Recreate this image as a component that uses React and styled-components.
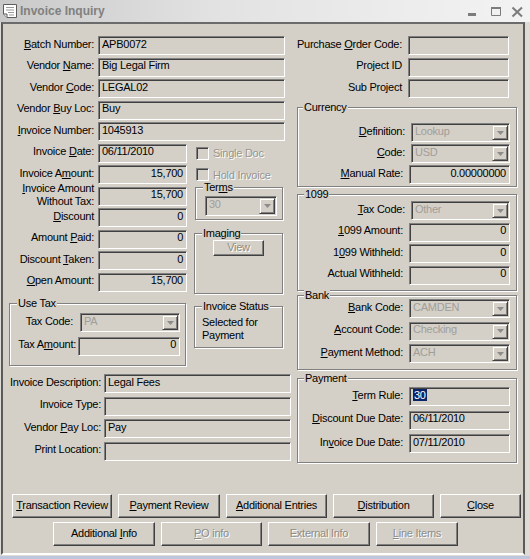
import React from "react";
import styled, { createGlobalStyle } from "styled-components";

const GlobalStyle = createGlobalStyle`
  html, body { margin: 0; padding: 0; background: #d4d0c8; }
  #root { width: 530px; height: 559px; }
`;

const Window = styled.div`
  width: 530px;
  height: 559px;
  display: flex;
  flex-direction: column;
  background: #dedbd5;
  overflow: hidden;
  font-family: "Liberation Sans", Arial, sans-serif;
  font-size: 11px;
  letter-spacing: -0.25px;
  color: #000;
`;

const TitleBar = styled.div`
  height: 22px;
  flex: none;
  display: flex;
  align-items: center;
  padding: 0 6px 0 2px;
  box-sizing: border-box;
  background: linear-gradient(90deg, #c9c9c9 0%, #e2e2e2 40%, #f3f3f3 100%);
`;

const TitleText = styled.div`
  flex: 1;
  margin-left: 2px;
  font-size: 12px;
  font-weight: bold;
  letter-spacing: 0;
  color: #808080;
`;

const TitleGlyph = styled.svg`
  display: block;
  flex: none;
  margin-left: ${(p) => p.$ml || 0}px;
`;

const Frame = styled.div`
  flex: 1;
  display: flex;
  flex-direction: column;
  margin: 0 5px 0 1px;
  background: #d4d0c8;
  border-style: solid;
  border-width: 2px;
  border-color: #6b6b6b #5a5a5a #ffffff #5a5a5a;
  padding: 12px 0 0 5px;
`;

const BottomStrip = styled.div`
  flex: none;
  height: 3px;
  margin-top: 1px;
  background: #bcc6dc;
`;

const MainArea = styled.div`
  display: flex;
  align-items: flex-start;
  gap: 5px;
`;

const Pane = styled.div`
  width: ${(p) => p.$w}px;
  flex: none;
  display: flex;
  flex-direction: column;
`;

const Stack = styled.div`
  display: flex;
  flex-direction: column;
  gap: ${(p) => p.$gap ?? 0}px;
  margin-top: ${(p) => p.$mt ?? 0}px;
  ${(p) => (p.$w ? `width:${p.$w}px; flex:none;` : "")}
`;

const Split = styled.div`
  display: flex;
  align-items: flex-start;
  gap: ${(p) => p.$gap ?? 0}px;
  margin-top: ${(p) => p.$mt ?? 0}px;
  margin-left: ${(p) => p.$ml ?? 0}px;
`;

const Row = styled.div`
  display: flex;
  align-items: center;
  justify-content: ${(p) => (p.$end ? "flex-end" : "flex-start")};
  height: ${(p) => p.$h ?? 19}px;
  gap: ${(p) => p.$gap ?? 4}px;
  padding-right: ${(p) => p.$pr ?? 0}px;
  flex: none;
`;

const Label = styled.span`
  ${(p) => (p.$w ? `width:${p.$w}px; flex:none;` : "")}
  text-align: right;
  white-space: nowrap;
  line-height: 13px;
  padding-bottom: 3px;
`;

const Field = styled.div`
  width: ${(p) => p.$w}px;
  height: 100%;
  flex: none;
  box-sizing: border-box;
  border: 1px solid;
  border-color: #808080 #ffffff #ffffff #808080;
  box-shadow: inset 1px 1px 0 #404040, inset -1px -1px 0 #d4d0c8;
  background: #d4d0c8;
  display: flex;
  align-items: center;
  justify-content: ${(p) => (p.$right ? "flex-end" : "flex-start")};
  padding: 0 3px 3px 3px;
  white-space: nowrap;
  overflow: hidden;
  line-height: 13px;
`;

const ComboBox = styled(Field)`
  justify-content: space-between;
  padding: 0 1px 0 3px;
  color: #a19e99;
`;

const ComboText = styled.span`
  padding-bottom: 3px;
`;

const DropButton = styled.span`
  width: 16px;
  height: calc(100% - 2px);
  flex: none;
  box-sizing: border-box;
  border: 1px solid;
  border-color: #d4d0c8 #404040 #404040 #d4d0c8;
  box-shadow: inset 1px 1px 0 #ffffff, inset -1px -1px 0 #808080;
  background: #d4d0c8;
  display: flex;
  align-items: center;
  justify-content: center;
`;

const Selected = styled.span`
  background: #0a246a;
  color: #ffffff;
  padding: 0 1px;
  line-height: 12px;
`;

const Group = styled.div`
  position: relative;
  box-sizing: border-box;
  width: ${(p) => p.$w}px;
  flex: none;
  margin-top: ${(p) => p.$mt ?? 0}px;
  margin-left: ${(p) => p.$ml ?? 0}px;
  border: 1px solid #808080;
  box-shadow: inset 1px 1px 0 #ffffff, 1px 1px 0 #ffffff;
  padding: ${(p) => p.$pad || "0"};
  display: flex;
  flex-direction: column;
  gap: ${(p) => p.$gap ?? 0}px;
`;

const Legend = styled.span`
  position: absolute;
  top: -7px;
  left: ${(p) => p.$x ?? 6}px;
  padding: 0 1px;
  background: #d4d0c8;
  line-height: 13px;
  white-space: nowrap;
`;

const StatusText = styled.div`
  line-height: 12.5px;
`;

const CheckRow = styled.div`
  display: flex;
  align-items: center;
  gap: 4px;
  height: 19px;
  padding-left: 2px;
  color: #97948f;
  text-shadow: 1px 1px 0 #ffffff;
`;

const CheckBox = styled.span`
  width: 13px;
  height: 13px;
  flex: none;
  box-sizing: border-box;
  border: 1px solid;
  border-color: #808080 #ffffff #ffffff #808080;
  box-shadow: inset 1px 1px 0 #404040, inset -1px -1px 0 #d4d0c8;
  background: #d4d0c8;
`;

const ButtonRow = styled.div`
  display: flex;
  gap: 6px;
  margin-top: ${(p) => p.$mt ?? 0}px;
  margin-left: ${(p) => p.$ml ?? 0}px;
`;

const Button = styled.button`
  width: ${(p) => p.$w}px;
  height: ${(p) => p.$h ?? 24}px;
  flex: none;
  box-sizing: border-box;
  margin: 0;
  padding: 0 0 2px 0;
  font: inherit;
  letter-spacing: inherit;
  background: #d4d0c8;
  border: 1px solid;
  border-color: #ffffff #404040 #404040 #ffffff;
  box-shadow: inset -1px -1px 0 #808080;
  color: ${(p) => (p.disabled ? "#8e8b86" : "#000000")};
  text-shadow: ${(p) => (p.disabled ? "1px 1px 0 #ffffff" : "none")};
  align-self: ${(p) => (p.$center ? "center" : "auto")};
  margin-left: ${(p) => p.$ml ?? 0}px;
`;

const Arrow = () => (
  <svg width="7" height="4" viewBox="0 0 7 4">
    <polygon points="0,0 7,0 3.5,4" fill="#8c8c8c" />
  </svg>
);

const Combo = ({ w, children }) => (
  <ComboBox $w={w}>
    <ComboText>{children}</ComboText>
    <DropButton>
      <Arrow />
    </DropButton>
  </ComboBox>
);

const DocIcon = () => (
  <TitleGlyph width="16" height="16" viewBox="0 0 16 16">
    <path d="M1.5 1.5H14.5V14.5H5L1.5 11Z" fill="#ffffff" stroke="#5c5c5c" />
    <path d="M1.5 11H5V14.5" fill="#e0e0e0" stroke="#5c5c5c" />
    <path d="M4 4.5H12M4 7H12M6 9.5H12M7 12H12" stroke="#9a9a9a" />
  </TitleGlyph>
);

const topRows = [
  [<><u>B</u>atch Number:</>, "APB0072"],
  [<>Vendor <u>N</u>ame:</>, "Big Legal Firm"],
  [<>Vendor <u>C</u>ode:</>, "LEGAL02"],
  [<>Vendor <u>B</u>uy Loc:</>, "Buy"],
  [<><u>I</u>nvoice Number:</>, "1045913"],
];

const moneyRows = [
  [<>Invoice <u>D</u>ate:</>, "06/11/2010", false],
  [<>Invoice A<u>m</u>ount:</>, "15,700", true],
  [<><u>I</u>nvoice Amount<br />Without Tax:</>, "15,700", true],
  [<><u>D</u>iscount</>, "0", true],
  [<>Amount <u>P</u>aid:</>, "0", true],
  [<>Discount <u>T</u>aken:</>, "0", true],
  [<><u>O</u>pen Amount:</>, "15,700", true],
];

const bottomRows = [
  ["Invoice Description:", "Legal Fees"],
  ["Invoice Type:", ""],
  [<>Vendor <u>P</u>ay Loc:</>, "Pay"],
  ["Print Location:", ""],
];

const poRows = [
  [<>Purchase <u>O</u>rder Code:</>, ""],
  ["Project ID", ""],
  ["Sub Project", ""],
];

export default function App() {
  return (
    <>
      <GlobalStyle />
      <Window>
        <TitleBar>
          <DocIcon />
          <TitleText>Invoice Inquiry</TitleText>
          <TitleGlyph width="9" height="16" viewBox="0 0 9 16">
            <rect x="0" y="10" width="8" height="3" fill="#7c7c7c" />
          </TitleGlyph>
          <TitleGlyph $ml={14} width="11" height="16" viewBox="0 0 11 16">
            <path d="M0.5 4.5H9.5V12.5H0.5Z" fill="none" stroke="#7c7c7c" />
            <rect x="0" y="4" width="10" height="2" fill="#7c7c7c" />
          </TitleGlyph>
          <TitleGlyph $ml={9} width="13" height="16" viewBox="0 0 13 16">
            <path d="M1.5 4.5L11 13.5M11 4.5L1.5 13.5" stroke="#7c7c7c" strokeWidth="2" />
          </TitleGlyph>
        </TitleBar>

        <Frame>
          <MainArea>
            <Pane $w={283}>
              <Stack $gap={2.5}>
                {topRows.map(([l, v], i) => (
                  <Row key={i}>
                    <Label $w={86}>{l}</Label>
                    <Field $w={187}>{v}</Field>
                  </Row>
                ))}
                <Split $gap={7}>
                  <Stack $gap={2.5} $w={179}>
                    {moneyRows.map(([l, v, r], i) => (
                      <Row key={i}>
                        <Label $w={86}>{l}</Label>
                        <Field $w={89} $right={r}>{v}</Field>
                      </Row>
                    ))}
                  </Stack>
                  <Stack $gap={2.5} $w={89}>
                    <CheckRow>
                      <CheckBox />
                      Single Doc
                    </CheckRow>
                    <CheckRow>
                      <CheckBox />
                      Hold Invoice
                    </CheckRow>
                    <Group $w={88} $ml={1} $pad="8.5px 4px 3px 9px">
                      <Legend $x={7}>Ter<u>m</u>s</Legend>
                      <Row $h={20}>
                        <Combo w={72}>30</Combo>
                      </Row>
                    </Group>
                    <Group $w={89} $mt={10} $pad="6.5px 0 37px 0">
                      <Legend $x={7}>Imaging</Legend>
                      <Button $w={51} $h={16} $center disabled>
                        View
                      </Button>
                    </Group>
                  </Stack>
                </Split>
              </Stack>

              <Split $gap={8} $mt={9} $ml={1}>
                <Group $w={177} $pad="9px 5px 9px 0" $gap={4.5}>
                  <Legend $x={7}>Use Tax</Legend>
                  <Row $end $gap={7}>
                    <Label>Tax Code:</Label>
                    <Combo w={100}>PA</Combo>
                  </Row>
                  <Row $end $gap={2}>
                    <Label>
                      Tax A<u>m</u>ount:
                    </Label>
                    <Field $w={102} $right>0</Field>
                  </Row>
                </Group>
                <Group $w={89} $mt={3} $pad="9px 4px 6px 7px">
                  <Legend $x={7}>Invoice Status</Legend>
                  <StatusText>
                    Selected for
                    <br />
                    Payment
                  </StatusText>
                </Group>
              </Split>

              <Stack $gap={3.5} $mt={8.5}>
                {bottomRows.map(([l, v], i) => (
                  <Row key={i} $gap={3}>
                    <Label $w={93}>{l}</Label>
                    <Field $w={187}>{v}</Field>
                  </Row>
                ))}
              </Stack>
            </Pane>

            <Pane $w={221}>
              <Stack $gap={2.5}>
                {poRows.map(([l, v], i) => (
                  <Row key={i} $end $gap={6} $pr={8}>
                    <Label>{l}</Label>
                    <Field $w={101}>{v}</Field>
                  </Row>
                ))}
              </Stack>

              <Group $w={220} $ml={1} $mt={9} $pad="15px 6px 2px 0" $gap={2}>
                <Legend $x={5}>Currency</Legend>
                <Row $end $gap={6}>
                  <Label><u>D</u>efinition:</Label>
                  <Combo w={99}>Lookup</Combo>
                </Row>
                <Row $end $gap={6}>
                  <Label><u>C</u>ode:</Label>
                  <Combo w={99}>USD</Combo>
                </Row>
                <Row $end $gap={6}>
                  <Label><u>M</u>anual Rate:</Label>
                  <Field $w={101} $right>0.00000000</Field>
                </Row>
              </Group>

              <Group $w={220} $ml={1} $mt={7} $pad="6px 6px 5px 0" $gap={2.5}>
                <Legend $x={6}>1099</Legend>
                <Row $end $gap={6}>
                  <Label><u>T</u>ax Code:</Label>
                  <Combo w={99}>Other</Combo>
                </Row>
                <Row $end $gap={6}>
                  <Label><u>1</u>099 Amount:</Label>
                  <Field $w={101} $right>0</Field>
                </Row>
                <Row $end $gap={6}>
                  <Label>1<u>0</u>99 Withheld:</Label>
                  <Field $w={101} $right>0</Field>
                </Row>
                <Row $end $gap={6}>
                  <Label>Actual Withheld:</Label>
                  <Field $w={101} $right>0</Field>
                </Row>
              </Group>

              <Group $w={220} $ml={1} $mt={4.5} $pad="3px 6px 6px 0" $gap={3.5}>
                <Legend $x={6}>Bank</Legend>
                <Row $end $gap={6}>
                  <Label><u>B</u>ank Code:</Label>
                  <Combo w={101}>CAMDEN</Combo>
                </Row>
                <Row $end $gap={6}>
                  <Label><u>A</u>ccount Code:</Label>
                  <Combo w={101}>Checking</Combo>
                </Row>
                <Row $end $gap={6}>
                  <Label><u>P</u>ayment Method:</Label>
                  <Combo w={101}>ACH</Combo>
                </Row>
              </Group>

              <Group $w={220} $ml={1} $mt={8} $pad="8px 6px 9px 0" $gap={4.5}>
                <Legend $x={6}>Payment</Legend>
                <Row $end $gap={6}>
                  <Label><u>T</u>erm Rule:</Label>
                  <Field $w={101}>
                    <Selected>30</Selected>
                  </Field>
                </Row>
                <Row $end $gap={6}>
                  <Label><u>D</u>iscount Due Date:</Label>
                  <Field $w={101}>06/11/2010</Field>
                </Row>
                <Row $end $gap={6}>
                  <Label>In<u>v</u>oice Due Date:</Label>
                  <Field $w={101}>07/11/2010</Field>
                </Row>
              </Group>
            </Pane>
          </MainArea>

          <ButtonRow $mt={31} $ml={4}>
            <Button $w={100}><u>T</u>ransaction Review</Button>
            <Button $w={102}><u>P</u>ayment Review</Button>
            <Button $w={101}><u>A</u>dditional Entries</Button>
            <Button $w={101}><u>D</u>istribution</Button>
            <Button $w={81}><u>C</u>lose</Button>
          </ButtonRow>
          <ButtonRow $mt={4} $ml={45}>
            <Button $w={102}>Additional <u>I</u>nfo</Button>
            <Button $w={101} disabled><u>P</u>O info</Button>
            <Button $w={102} disabled>External Info</Button>
            <Button $w={82} disabled><u>L</u>ine Items</Button>
          </ButtonRow>
        </Frame>
        <BottomStrip />
      </Window>
    </>
  );
}
